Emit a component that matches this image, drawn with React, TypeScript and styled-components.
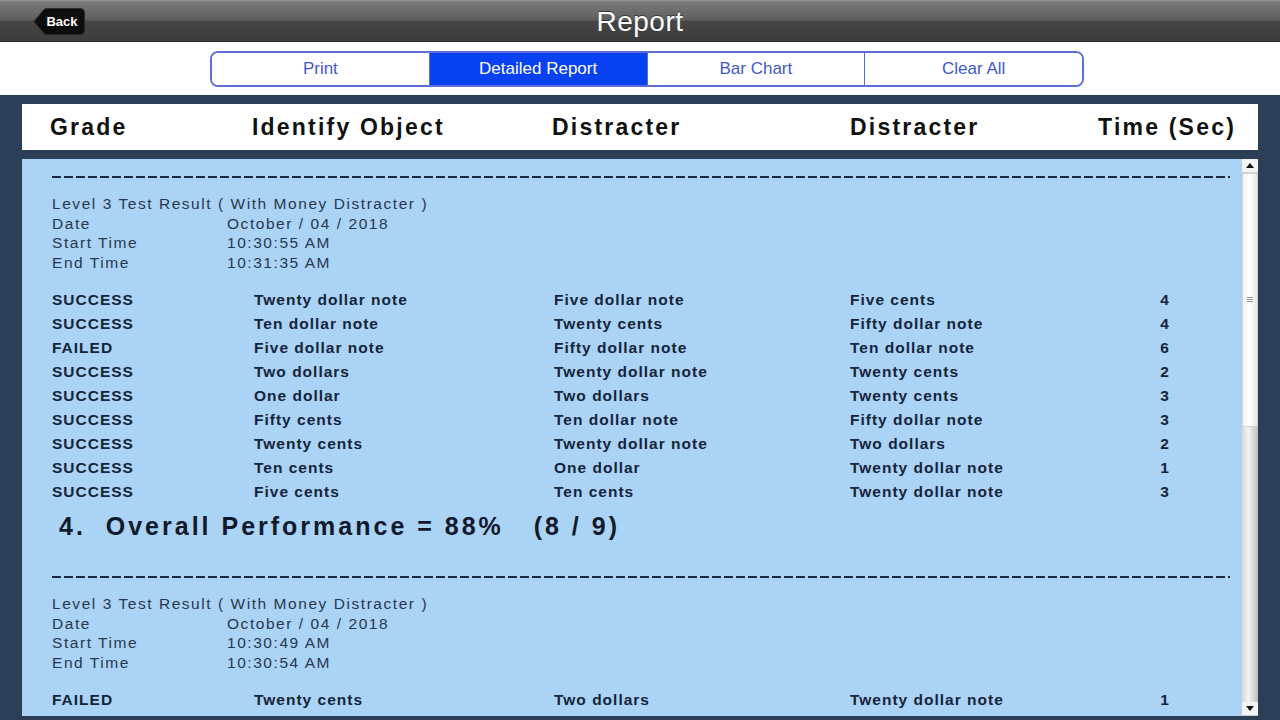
import styled, { createGlobalStyle } from 'styled-components';

const GlobalStyle = createGlobalStyle`
  html, body {
    margin: 0;
    padding: 0;
    background: #2c3f57;
    font-family: "Liberation Sans", Arial, sans-serif;
    overflow: hidden;
  }
`;

const Screen = styled.div`
  width: 1280px;
  height: 720px;
  display: flex;
  flex-direction: column;
  background: #2c3f57;
  overflow: hidden;
`;

const TitleBar = styled.div`
  height: 42px;
  flex: none;
  display: flex;
  align-items: center;
  justify-content: center;
  position: relative;
  background: linear-gradient(#9a9a9a 0px, #7a7a7a 2px, #5e5e5e 20px, #464646 21px, #3c3c3c 42px);
  border-bottom: 1px solid #2a2a2a;
  box-sizing: border-box;
`;

const Title = styled.div`
  color: #fff;
  font-size: 28px;
  letter-spacing: 0.5px;
  padding-top: 3px;
  text-shadow: 0 -1px 0 rgba(0, 0, 0, 0.5);
`;

const BackButton = styled.button`
  position: absolute;
  left: 33px;
  top: 8px;
  width: 52px;
  height: 27px;
  padding: 0 0 0 6px;
  border: none;
  background: none;
  color: #fff;
  font-family: "Liberation Sans", Arial, sans-serif;
  font-weight: bold;
  font-size: 13px;
  display: flex;
  align-items: center;
  justify-content: center;
  cursor: pointer;

  svg {
    position: absolute;
    inset: 0;
  }

  span {
    position: relative;
  }
`;

const SegmentArea = styled.div`
  height: 53px;
  flex: none;
  background: #fff;
  display: flex;
  align-items: center;
  justify-content: center;
  padding-left: 14px;
  box-sizing: border-box;
`;

const Segments = styled.div`
  display: flex;
  width: 874px;
  height: 36px;
  border: 2px solid #5d6fd6;
  border-radius: 8px;
  overflow: hidden;
  box-sizing: border-box;
`;

const Segment = styled.div<{ $active?: boolean }>`
  flex: 1;
  display: flex;
  align-items: center;
  justify-content: center;
  font-size: 17px;
  color: ${(p) => (p.$active ? '#fff' : '#4159c9')};
  background: ${(p) => (p.$active ? '#0841f2' : '#fff')};
  & + & {
    border-left: 1px solid #5d6fd6;
  }
`;

const Body = styled.div`
  flex: 1;
  display: flex;
  flex-direction: column;
  gap: 9px;
  padding: 9px 22px 4px 22px;
  min-height: 0;
`;

const HeaderBox = styled.div`
  height: 46px;
  flex: none;
  background: #fff;
  display: grid;
  grid-template-columns: 202px 300px 298px 1fr auto;
  align-items: center;
  padding: 0 22px 0 28px;
`;

const HeaderCell = styled.div`
  font-size: 23px;
  font-weight: bold;
  letter-spacing: 2.2px;
  color: #111;
`;

const Panel = styled.div`
  flex: 1;
  display: flex;
  background: #aad3f5;
  min-height: 0;
`;

const Scroller = styled.div`
  flex: 1;
  overflow: hidden;
  padding: 17px 0 0 30px;
`;

const Dash = styled.div`
  width: 1178px;
  height: 2px;
  background: repeating-linear-gradient(90deg, #1b2a40 0 9px, transparent 9px 12px);
`;

const Block = styled.div`
  margin-bottom: 35px;
`;

const Info = styled.div`
  margin-top: 16px;
  display: grid;
  grid-template-columns: 175px 1fr;
  font-size: 15.5px;
  line-height: 19.7px;
  letter-spacing: 1.55px;
  color: #283850;
`;

const InfoTitle = styled.div`
  grid-column: 1 / 3;
`;

const Rows = styled.div`
  margin-top: 15px;
`;

const Row = styled.div`
  display: grid;
  grid-template-columns: 202px 300px 296px 250px 130px;
  height: 24px;
  align-items: center;
  font-size: 15.5px;
  font-weight: bold;
  letter-spacing: 1px;
  color: #14243a;
`;

const TimeCell = styled.div`
  text-align: center;
`;

const Overall = styled.div`
  margin: 7px 0 0 7px;
  height: 30px;
  line-height: 30px;
  font-size: 25px;
  font-weight: bold;
  letter-spacing: 3px;
  white-space: pre;
  color: #101a2a;
`;

const ScrollBar = styled.div`
  width: 17px;
  flex: none;
  display: flex;
  flex-direction: column;
  background: linear-gradient(90deg, #d8d8d8, #f4f4f4 40%, #bdbdbd);
  border-left: 1px solid #c9c9c9;
  box-sizing: border-box;
`;

const ArrowBox = styled.div`
  height: 13px;
  flex: none;
  background: #f4f4f4;
  border-bottom: 1px solid #cfcfcf;
  display: flex;
  align-items: center;
  justify-content: center;
`;

const Thumb = styled.div`
  height: 252px;
  flex: none;
  background: linear-gradient(90deg, #f2f2f2, #ffffff 50%, #e6e6e6);
  border: 1px solid #d4d4d4;
  border-radius: 2px;
  display: flex;
  align-items: center;
  justify-content: center;
`;

const Grip = styled.div`
  width: 6px;
  height: 6px;
  background: repeating-linear-gradient(#999 0 1px, transparent 1px 2px);
`;

const Track = styled.div`
  flex: 1;
`;

type Result = [string, string, string, string, number];

type Test = {
  date: string;
  start: string;
  end: string;
  rows: Result[];
  overall?: string;
};

const tests: Test[] = [
  {
    date: 'October / 04 / 2018',
    start: '10:30:55 AM',
    end: '10:31:35 AM',
    rows: [
      ['SUCCESS', 'Twenty dollar note', 'Five dollar note', 'Five cents', 4],
      ['SUCCESS', 'Ten dollar note', 'Twenty cents', 'Fifty dollar note', 4],
      ['FAILED', 'Five dollar note', 'Fifty dollar note', 'Ten dollar note', 6],
      ['SUCCESS', 'Two dollars', 'Twenty dollar note', 'Twenty cents', 2],
      ['SUCCESS', 'One dollar', 'Two dollars', 'Twenty cents', 3],
      ['SUCCESS', 'Fifty cents', 'Ten dollar note', 'Fifty dollar note', 3],
      ['SUCCESS', 'Twenty cents', 'Twenty dollar note', 'Two dollars', 2],
      ['SUCCESS', 'Ten cents', 'One dollar', 'Twenty dollar note', 1],
      ['SUCCESS', 'Five cents', 'Ten cents', 'Twenty dollar note', 3],
    ],
    overall: '4.  Overall Performance = 88%   (8 / 9)',
  },
  {
    date: 'October / 04 / 2018',
    start: '10:30:49 AM',
    end: '10:30:54 AM',
    rows: [['FAILED', 'Twenty cents', 'Two dollars', 'Twenty dollar note', 1]],
  },
];

const TestBlock = ({ test }: { test: Test }) => (
  <Block>
    <Dash />
    <Info>
      <InfoTitle>Level 3 Test Result ( With Money Distracter )</InfoTitle>
      <div>Date</div>
      <div>{test.date}</div>
      <div>Start Time</div>
      <div>{test.start}</div>
      <div>End Time</div>
      <div>{test.end}</div>
    </Info>
    <Rows>
      {test.rows.map((r, i) => (
        <Row key={i}>
          <div>{r[0]}</div>
          <div>{r[1]}</div>
          <div>{r[2]}</div>
          <div>{r[3]}</div>
          <TimeCell>{r[4]}</TimeCell>
        </Row>
      ))}
    </Rows>
    {test.overall && <Overall>{test.overall}</Overall>}
  </Block>
);

export default function App() {
  return (
    <Screen>
      <GlobalStyle />
      <TitleBar>
        <BackButton>
          <svg width="52" height="27" viewBox="0 0 52 27">
            <path
              d="M1 13.5 L11 1.5 Q12 0.5 14 0.5 L47 0.5 Q51.5 0.5 51.5 5 L51.5 22 Q51.5 26.5 47 26.5 L14 26.5 Q12 26.5 11 25.5 Z"
              fill="#0d0d0d"
              stroke="#2b2b2b"
            />
          </svg>
          <span>Back</span>
        </BackButton>
        <Title>Report</Title>
      </TitleBar>
      <SegmentArea>
        <Segments>
          <Segment>Print</Segment>
          <Segment $active>Detailed Report</Segment>
          <Segment>Bar Chart</Segment>
          <Segment>Clear All</Segment>
        </Segments>
      </SegmentArea>
      <Body>
        <HeaderBox>
          <HeaderCell>Grade</HeaderCell>
          <HeaderCell>Identify Object</HeaderCell>
          <HeaderCell>Distracter</HeaderCell>
          <HeaderCell>Distracter</HeaderCell>
          <HeaderCell>Time (Sec)</HeaderCell>
        </HeaderBox>
        <Panel>
          <Scroller>
            {tests.map((t, i) => (
              <TestBlock key={i} test={t} />
            ))}
          </Scroller>
          <ScrollBar>
            <ArrowBox>
              <svg width="8" height="5" viewBox="0 0 8 5">
                <path d="M0 5 L4 0 L8 5 Z" fill="#111" />
              </svg>
            </ArrowBox>
            <Thumb>
              <Grip />
            </Thumb>
            <Track />
            <ArrowBox>
              <svg width="8" height="5" viewBox="0 0 8 5">
                <path d="M0 0 L4 5 L8 0 Z" fill="#111" />
              </svg>
            </ArrowBox>
          </ScrollBar>
        </Panel>
      </Body>
    </Screen>
  );
}
